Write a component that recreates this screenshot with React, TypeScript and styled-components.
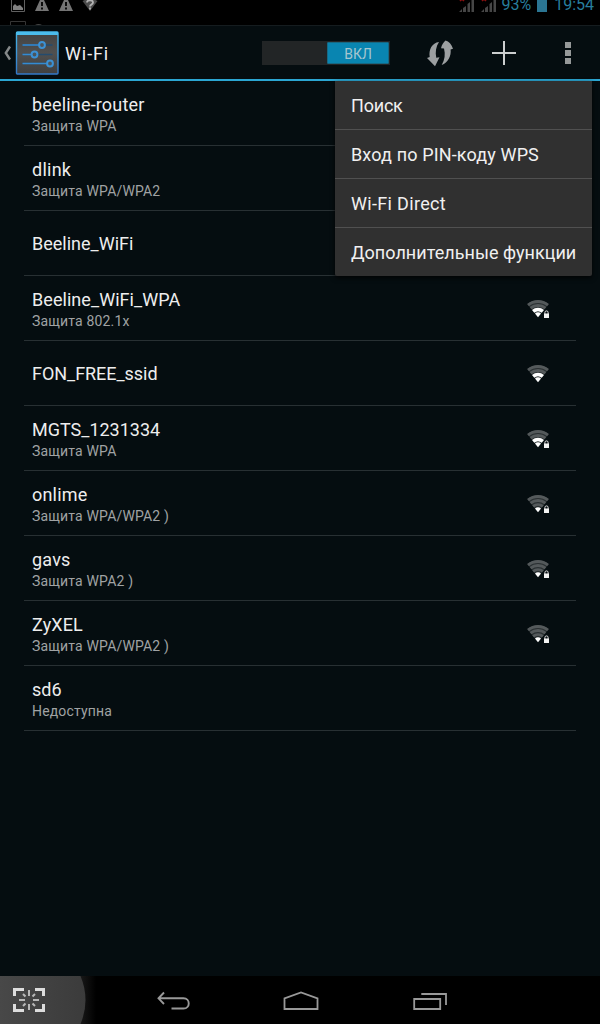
import React from 'react';
import styled, { createGlobalStyle } from 'styled-components';

const GlobalStyle = createGlobalStyle`
  * { box-sizing: border-box; }
  body { margin: 0; background: #000; font-family: Roboto, "Noto Sans", sans-serif; }
  svg { display: block; flex: none; }
`;

const Screen = styled.div`
  width: 600px;
  height: 1024px;
  display: flex;
  flex-direction: column;
  overflow: hidden;
  background: #050d10;
`;

const StatusBar = styled.header`
  height: 25px;
  flex: none;
  display: flex;
  justify-content: space-between;
  background: #000;
`;

const StatusInfo = styled.div`
  display: flex;
  align-items: flex-start;
  padding-right: 6px;
  color: #277e9d;
`;

const StatusText = styled.span`
  font-size: 16px;
  line-height: 10px;
  white-space: nowrap;
`;

const Battery = styled.span`
  width: 10px;
  height: 12px;
  margin: 0 7px 0 6px;
  background: #2b7592;
`;

const ActionBar = styled.div`
  height: 56px;
  flex: none;
  display: flex;
  align-items: center;
  border-top: 1px solid #151c1f;
  border-bottom: 2px solid #2ba6d2;
`;

const Title = styled.h1`
  margin: 0 0 0 6px;
  width: 197px;
  padding-top: 2px;
  font-size: 18px;
  line-height: 24px;
  font-weight: 400;
  letter-spacing: 0.9px;
  color: #f0f0f0;
`;

const Switch = styled.div`
  width: 128px;
  height: 24px;
  padding: 1px;
  display: flex;
  justify-content: flex-end;
  background: #222526;
`;

const Thumb = styled.div`
  width: 62px;
  height: 22px;
  border-radius: 1px;
  background: #0985b1;
  border: 1px solid #176984;
  color: #a6c5cf;
  font-size: 14px;
  line-height: 22px;
  text-align: center;
`;

const Actions = styled.div`
  display: flex;
  align-items: center;
  gap: 32px;
  margin-left: 34px;
`;

const Content = styled.main`
  position: relative;
  flex: 1;
  padding: 0 24px;
`;

const Row = styled.div`
  height: 65px;
  display: flex;
  align-items: center;
  justify-content: space-between;
  padding: 0 25px 0 8px;
  border-bottom: 1px solid #283033;
`;

const Labels = styled.div`
  padding-top: 2px;
`;

const Name = styled.div<{ $spacing: number }>`
  font-size: 18px;
  line-height: 24px;
  letter-spacing: ${p => p.$spacing}px;
  color: #eeeeee;
`;

const Detail = styled.div`
  font-size: 14px;
  line-height: 19px;
  letter-spacing: 0.17px;
  color: #a0a3a4;
`;

const Menu = styled.div`
  position: absolute;
  top: 0;
  right: 8px;
  width: 257px;
  background: #303030;
  border-radius: 0 0 2px 2px;
  box-shadow: 0 2px 5px rgba(0, 0, 0, 0.8);
`;

const MenuItem = styled.div<{ $spacing: number }>`
  height: 49px;
  padding-left: 16px;
  font-size: 18px;
  line-height: 49px;
  letter-spacing: ${p => p.$spacing}px;
  white-space: nowrap;
  color: #f0f0f0;
  border-bottom: 1px solid #505050;
  &:last-child { height: 48px; border-bottom: 0; }
`;

const NavBar = styled.nav`
  height: 48px;
  flex: none;
  display: flex;
  align-items: center;
  background: #000;
`;

const NavKeys = styled.div`
  display: flex;
  align-items: center;
  margin-left: 57px;
  gap: 92px;
`;

const NotificationIcons = () => (
  <svg width="120" height="25" viewBox="0 0 120 25">
    <path d="M11.5 0V11.5H24.5V0" fill="none" stroke="#606060" />
    <path d="M13 10V6l2-2 2 2 3-1 3 3v2z" fill="#808080" />
    {[42, 66].map(x => (
      <g key={x}>
        <path d={`M${x - 2} 0h4l5 11h-14z`} fill="#747474" />
        <path d={`M${x} 2v4M${x} 7.5v2`} stroke="#000" strokeWidth="1.8" />
      </g>
    ))}
    <path d="M82.5 1Q90-3 97.5 1L90 11z" fill="#4b4b4b" />
    <path d="M87 2.500c0-3 6-3 6 0 0 2-3 2-3 4M90 7.500v2" fill="none" stroke="#b3b3b3" strokeWidth="1.8" />
    <path d="M10.500 25V21.500H25.500V25" fill="none" stroke="#353535" />
    <path d="M35 25q3.500-2 7 0z" fill="#444" />
  </svg>
);

const Signals = () => (
  <svg width="43" height="14" viewBox="0 0 43 14">
    {[0, 22].map(x => (
      <g key={x} transform={`translate(${x})`}>
        <path d="M1 12l3-3v3zM5 12V8l3-2v6zM9.500 12V4l2.500-2v10zM13.500 12V0H16v12z" fill="#464646" />
        <path d="M2 1l2-2 2 2" fill="none" stroke="#8c1010" strokeWidth="1.5" />
      </g>
    ))}
  </svg>
);

const BackChevron = () => (
  <svg width="15" height="20" viewBox="0 0 15 20">
    <path d="M10 3.500L5.800 10l4.200 6.500" fill="none" stroke="#85898a" strokeWidth="2.4" />
  </svg>
);

const SettingsIcon = () => (
  <svg width="44" height="44" viewBox="0 0 44 44">
    <defs>
      <linearGradient id="panel" x1="0" y1="0" x2="0" y2="1">
        <stop offset="0" stopColor="#424242" /><stop offset=".5" stopColor="#505050" /><stop offset="1" stopColor="#404040" />
      </linearGradient>
      <linearGradient id="frame" x1="0" y1="0" x2="0" y2="1">
        <stop offset="0" stopColor="#46b6e8" /><stop offset="1" stopColor="#3278c8" />
      </linearGradient>
    </defs>
    <rect x="1.5" y="1" width="41.5" height="42" rx="1" fill="url(#panel)" stroke="url(#frame)" strokeWidth="1.4" />
    <path d="M1 2.500h42" stroke="#4bbcec" strokeWidth="3.2" />
    <path d="M7.500 14h30M7.500 23.500h30M7.500 32.500h30" stroke="#244b6e" strokeWidth="1.7" />
    <path d="M7.500 14h17M7.500 23.500h9M7.500 32.500h25" stroke="#348bd2" strokeWidth="1.7" />
    {[[27, 14], [19.5, 23.5], [35, 32.5]].map(([x, y]) => (
      <circle key={y} cx={x} cy={y} r="2.9" fill="#4b555c" stroke="#3c91d4" strokeWidth="2" />
    ))}
  </svg>
);

const WpsIcon = () => (
  <svg width="32" height="32" viewBox="0 0 32 32" fill="#9c9fa1">
    <path d="M15 5C8 6 4.500 12.500 5.700 20L3 21 11 29.200 15.500 20.200 12.300 20.700C11 15 12 9.500 15 5z" />
    <path d="M17.700 28C24 25.500 27.500 18.500 26.600 12.400L29 11.800C27.500 7.500 25 4.500 21.500 3.600 19.500 5.500 17.800 8 17 11.200L20 11.500C21.500 17 20.800 23 17.700 28z" />
  </svg>
);

const PlusIcon = () => (
  <svg width="32" height="32" viewBox="0 0 32 32">
    <path d="M16 4v24M4 16h24" stroke="#cccecf" strokeWidth="2" />
  </svg>
);

const OverflowIcon = () => (
  <svg width="32" height="32" viewBox="0 0 32 32" fill="#969999">
    <path d="M13 5h6v6h-6zM13 13h6v6h-6zM13 21h6v6h-6z" />
  </svg>
);

// An arc of the signal fan, centred on its apex at (13, 21.3).
const fanArc = (r: number) => {
  const dx = r * 0.63;
  const y = 21.3 - r * 0.777;
  return `M${13 - dx} ${y}A${r} ${r} 0 0 1 ${13 + dx} ${y}`;
};

const WifiIcon = ({ level, locked }: { level: number; locked: boolean }) => (
  <svg width="26" height="24" viewBox="0 0 26 24">
    <path d={`${fanArc(17)}L13 21.3z`} fill="#2a3032" />
    <g fill="none" strokeWidth="2.9">
      <path d={fanArc(15.8)} stroke="#54595b" />
      <path d={fanArc(11.8)} stroke="#54595b" />
      <path d={fanArc(7.7)} stroke={level > 1 ? '#fff' : '#54595b'} strokeWidth={level > 1 ? 3.5 : 2.9} />
    </g>
    <path d={`${fanArc(4.8)}L13 21.3z`} fill="#fff" />
    {locked && (
      <>
        <path d="M18 16h7v7h-7z" fill="#050d10" />
        <path d="M19.900 18v-1.500a1.600 1.600 0 0 1 3.200 0V18" fill="none" stroke="#dedede" strokeWidth="1" />
        <rect x="19" y="17.5" width="5" height="4.5" fill="#f2f2f2" />
      </>
    )}
  </svg>
);

const CaptureKey = () => (
  <svg width="100" height="48" viewBox="0 0 100 48">
    <defs>
      <linearGradient id="halo"><stop offset=".78" stopColor="#1c1c1c" /><stop offset=".96" stopColor="#000" /></linearGradient>
      <linearGradient id="disc"><stop stopColor="#484848" /><stop offset="1" stopColor="#3b3b3b" /></linearGradient>
    </defs>
    <path d="M0 0h100v48H0z" fill="url(#halo)" />
    <path d="M0 0h80.500q10 24 0 48H0z" fill="url(#disc)" />
    <path d="M14.500 20v-6.500H24M35 13.500h8.500V20M14.500 28v6.500H24M35 34.500h8.500V28" fill="none" stroke="#ddd" strokeWidth="3" />
    <path d="M29 14v6M29 28v6M19 24h6M33 24h6M23 18l2.500 2.500M35 18l-2.500 2.500M23 30l2.500-2.500M35 30l-2.500-2.500" stroke="#b8b8b8" strokeWidth="2" />
  </svg>
);

const BackKey = () => (
  <svg width="34" height="24" viewBox="0 0 34 24" fill="none" stroke="#999" strokeWidth="1.9">
    <path d="M7 4.500L1.500 10.300 7 16M2 10.300h24.500c7 0 7 10.200 0 10.200H14.500" />
  </svg>
);

const HomeKey = () => (
  <svg width="37" height="24" viewBox="0 0 37 24" fill="none" stroke="#999" strokeWidth="1.8">
    <path d="M1.500 21V10.500L18 4.500l16.500 6V21z" />
  </svg>
);

const RecentKey = () => (
  <svg width="36" height="24" viewBox="0 0 36 24" fill="none" stroke="#999" strokeWidth="1.8">
    <path d="M2.200 11h26v10h-26zM9.300 6h24.700v11" />
  </svg>
);

interface Network { name: string; spacing: number; detail?: string; level?: number; locked?: boolean }

const networks: Network[] = [
  { name: 'beeline-router', spacing: 0.17, detail: 'Защита WPA' },
  { name: 'dlink', spacing: 0.25, detail: 'Защита WPA/WPA2' },
  { name: 'Beeline_WiFi', spacing: 0 },
  { name: 'Beeline_WiFi_WPA', spacing: 0.06, detail: 'Защита 802.1x', level: 2, locked: true },
  { name: 'FON_FREE_ssid', spacing: -0.04, level: 2 },
  { name: 'MGTS_1231334', spacing: 0, detail: 'Защита WPA', level: 2, locked: true },
  { name: 'onlime', spacing: 0.2, detail: 'Защита WPA/WPA2 )', level: 1, locked: true },
  { name: 'gavs', spacing: 0.2, detail: 'Защита WPA2 )', level: 1, locked: true },
  { name: 'ZyXEL', spacing: 0.1, detail: 'Защита WPA/WPA2 )', level: 1, locked: true },
  { name: 'sd6', spacing: 0, detail: 'Недоступна' },
];

const menuItems = [
  { label: 'Поиск', spacing: -0.2 },
  { label: 'Вход по PIN-коду WPS', spacing: 0.14 },
  { label: 'Wi-Fi Direct', spacing: 0.33 },
  { label: 'Дополнительные функции', spacing: 0.03 },
];

export default function App() {
  return (
    <Screen>
      <GlobalStyle />
      <StatusBar>
        <NotificationIcons />
        <StatusInfo>
          <Signals />
          <StatusText>93%</StatusText>
          <Battery />
          <StatusText>19:54</StatusText>
        </StatusInfo>
      </StatusBar>
      <ActionBar>
        <BackChevron />
        <SettingsIcon />
        <Title>Wi-Fi</Title>
        <Switch><Thumb>ВКЛ</Thumb></Switch>
        <Actions>
          <WpsIcon />
          <PlusIcon />
          <OverflowIcon />
        </Actions>
      </ActionBar>
      <Content>
        {networks.map(n => (
          <Row key={n.name}>
            <Labels>
              <Name $spacing={n.spacing}>{n.name}</Name>
              {n.detail && <Detail>{n.detail}</Detail>}
            </Labels>
            {n.level && <WifiIcon level={n.level} locked={!!n.locked} />}
          </Row>
        ))}
        <Menu>
          {menuItems.map(m => <MenuItem key={m.label} $spacing={m.spacing}>{m.label}</MenuItem>)}
        </Menu>
      </Content>
      <NavBar>
        <CaptureKey />
        <NavKeys>
          <BackKey />
          <HomeKey />
          <RecentKey />
        </NavKeys>
      </NavBar>
    </Screen>
  );
}
